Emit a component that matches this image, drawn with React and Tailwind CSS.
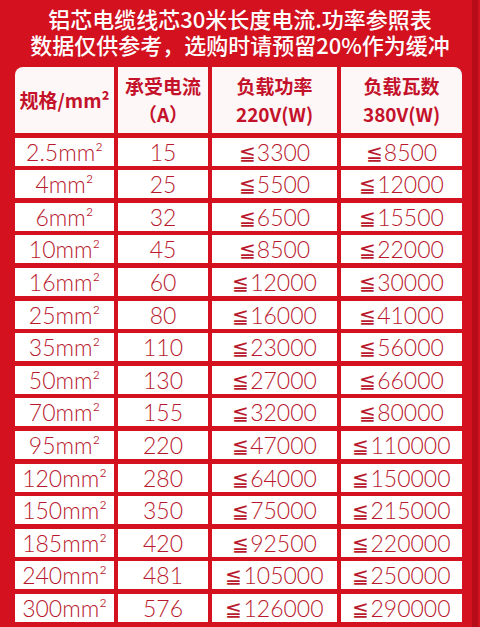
import React from "react";

const rows = [
  ["2.5", "15", "3300", "8500"],
  ["4", "25", "5500", "12000"],
  ["6", "32", "6500", "15500"],
  ["10", "45", "8500", "22000"],
  ["16", "60", "12000", "30000"],
  ["25", "80", "16000", "41000"],
  ["35", "110", "23000", "56000"],
  ["50", "130", "27000", "66000"],
  ["70", "155", "32000", "80000"],
  ["95", "220", "47000", "110000"],
  ["120", "280", "64000", "150000"],
  ["150", "350", "75000", "215000"],
  ["185", "420", "92500", "220000"],
  ["240", "481", "105000", "250000"],
  ["300", "576", "126000", "290000"],
];

const headCell =
  "bg-[#fdf7f7] flex flex-col items-center justify-center text-[#c4122b] font-bold text-[19px] leading-[28px] font-['Noto_Sans_CJK_SC','Noto_Sans',sans-serif]";
const bodyCell =
  "bg-white flex items-center justify-center overflow-hidden text-[#b8192d] text-[23px] leading-[28px] font-light font-['Lato','Open_Sans',sans-serif]";

export default function App() {
  return (
    <div className="relative w-[480px] h-[627px] overflow-hidden bg-[#d3111f] flex flex-col">
      <div className="absolute right-[2px] top-0 h-full w-[6px] bg-[#b70c19]" />
      <div className="pt-[5px] text-center text-white text-[22px] leading-[26px] font-medium font-['Noto_Sans_CJK_SC','Noto_Sans',sans-serif]">
        <div>铝芯电缆线芯30米长度电流.功率参照表</div>
        <div>数据仅供参考，选购时请预留20%作为缓冲</div>
      </div>
      <div className="mt-[10px] ml-[15px] flex flex-col gap-[4.6px]">
        <div className="grid grid-cols-[99px_90px_125px_121px] gap-x-[4px] h-[66px]">
          <div className={headCell + " rounded-tl-[8px]"}>规格/mm²</div>
          <div className={headCell}>
            <div>承受电流</div>
            <div>（A）</div>
          </div>
          <div className={headCell}>
            <div>负载功率</div>
            <div>220V(W)</div>
          </div>
          <div className={headCell + " rounded-tr-[8px]"}>
            <div>负载瓦数</div>
            <div>380V(W)</div>
          </div>
        </div>
        {rows.map((r, i) => (
          <div
            key={i}
            className="grid grid-cols-[99px_90px_125px_121px] grid-rows-[28px] gap-x-[4px] h-[28px]"
          >
            <div className={bodyCell}>{r[0]}mm²</div>
            <div className={bodyCell}>{r[1]}</div>
            <div className={bodyCell}>
              <span className="text-[20px] mr-[1px]">≦</span>
              {r[2]}
            </div>
            <div className={bodyCell}>
              <span className="text-[20px] mr-[1px]">≦</span>
              {r[3]}
            </div>
          </div>
        ))}
      </div>
    </div>
  );
}
